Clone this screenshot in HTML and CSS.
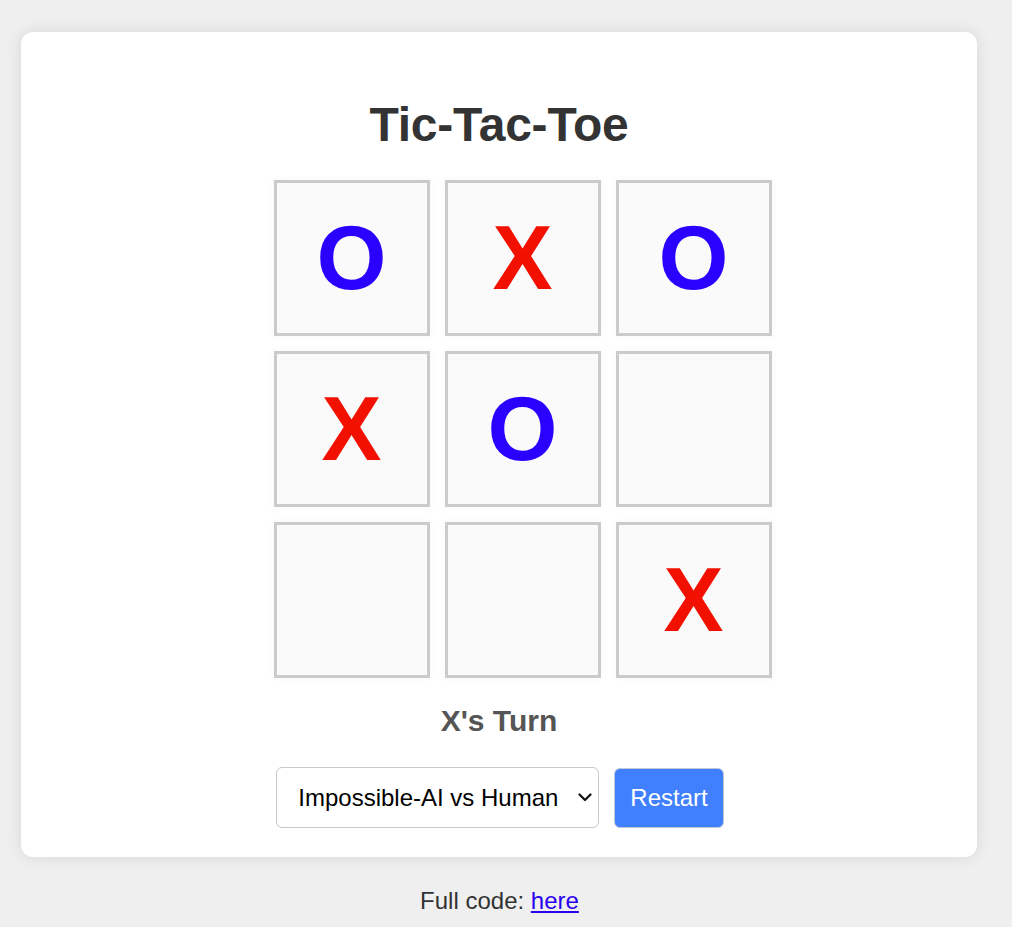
FILE: index.html
```html
<!DOCTYPE html>
<html lang="en">
<head>
<meta charset="utf-8">
<title>Tic-Tac-Toe</title>
<link rel="stylesheet" href="styles.css">
</head>
<body>
  <main class="card">
    <h1 class="title">Tic-Tac-Toe</h1>
    <div class="board">
      <div class="cell o">O</div>
      <div class="cell x">X</div>
      <div class="cell o">O</div>
      <div class="cell x">X</div>
      <div class="cell o">O</div>
      <div class="cell"></div>
      <div class="cell"></div>
      <div class="cell"></div>
      <div class="cell x">X</div>
    </div>
    <div class="status">X's Turn</div>
    <div class="controls">
      <div class="select-wrap">
        <select class="mode">
          <option>Impossible-AI vs Human</option>
          <option>Human vs Human</option>
        </select>
        <svg class="chevron" width="14" height="9" viewBox="0 0 14 9" aria-hidden="true">
          <path d="M1.5 1.5 L7 7 L12.5 1.5" fill="none" stroke="#111" stroke-width="2.2" stroke-linecap="round" stroke-linejoin="round"/>
        </svg>
      </div>
      <button class="restart" type="button">Restart</button>
    </div>
  </main>
  <p class="footer">Full code: <a href="#" class="link">here</a></p>
</body>
</html>
```
FILE: styles.css
```css
html, body {
  margin: 0;
  padding: 0;
}
body {
  background: #efefef;
  font-family: "Liberation Sans", Arial, sans-serif;
  color: #333;
  padding-right: 13px;
}
.card {
  margin: 32px 22px 0 21px;
  background: #fff;
  border-radius: 12px;
  box-shadow: 0 0 15px rgba(0, 0, 0, 0.1);
  padding: 65px 0 29px;
  display: flex;
  flex-direction: column;
  align-items: center;
}
.title {
  margin: 0 0 28px;
  font-size: 48px;
  line-height: 55px;
  font-weight: bold;
  letter-spacing: -0.2px;
  color: #333;
}
.board {
  display: grid;
  grid-template-columns: repeat(3, 156px);
  grid-auto-rows: 156px;
  gap: 15px;
  padding-left: 47px;
}
.cell {
  box-sizing: border-box;
  background: #fafafa;
  border: 3px solid #cbcbcb;
  box-shadow: 0 0 8px rgba(0, 0, 0, 0.04);
  display: flex;
  align-items: center;
  justify-content: center;
  font-size: 90px;
  font-weight: bold;
  line-height: 1;
}
.cell.x { color: #f21100; }
.cell.o { color: #2a00ff; }
.status {
  margin-top: 26px;
  font-size: 30px;
  line-height: 34px;
  font-weight: bold;
  color: #555;
}
.controls {
  margin-top: 29px;
  padding-left: 2px;
  display: flex;
  gap: 15px;
  align-items: center;
}
.select-wrap {
  position: relative;
  display: flex;
}
.mode {
  box-sizing: border-box;
  width: 323px;
  height: 61px;
  padding: 0 40px 0 21px;
  font-family: "Liberation Sans", Arial, sans-serif;
  font-size: 24px;
  color: #000;
  background: #fff;
  border: 1px solid #c8c8c8;
  border-radius: 6px;
  appearance: none;
  -webkit-appearance: none;
}
.chevron {
  position: absolute;
  right: 7px;
  top: 26px;
  pointer-events: none;
}
.restart {
  box-sizing: border-box;
  height: 60px;
  padding: 0 15px;
  font-family: "Liberation Sans", Arial, sans-serif;
  font-size: 24px;
  color: #fff;
  background: #4080ff;
  border: 1px solid #c0c8d8;
  border-radius: 6px;
}
.footer {
  margin: 30px 0 0;
  text-align: center;
  font-size: 24px;
  color: #333;
}
.link {
  color: #2a00f0;
}
```
